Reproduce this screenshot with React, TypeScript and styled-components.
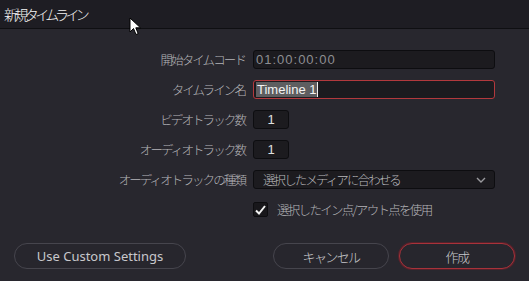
import styled, { createGlobalStyle } from "styled-components"

const GlobalStyle = createGlobalStyle`
  html, body {
    margin: 0;
    padding: 0;
    background: #28272e;
    overflow: hidden;
  }
`

const Window = styled.div`
  position: relative;
  width: 529px;
  height: 281px;
  background: #28272e;
  font-family: "Noto Sans CJK JP", "Noto Sans", sans-serif;
  color: #b4b4b8;
  display: flex;
  flex-direction: column;
`

const TitleBar = styled.div`
  height: 29px;
  box-sizing: border-box;
  background: #1e1d23;
  border-bottom: 1px solid #0f0f12;
  display: flex;
  align-items: center;
  padding-left: 4px;
  font-size: 14px;
  letter-spacing: -3.6px;
  font-weight: 300;
  color: #f4f4f4;
`

const Form = styled.div`
  display: grid;
  grid-template-columns: 245px 242px;
  grid-auto-rows: 19px;
  column-gap: 8px;
  row-gap: 11px;
  padding-top: 21px;
`

const Label = styled.div`
  font-size: 12.5px;
  letter-spacing: -1.9px;
  font-weight: 300;
  text-align: right;
  line-height: 19px;
  color: #b4b4b8;
  white-space: nowrap;
`

const Field = styled.div<{ $active?: boolean; $small?: boolean }>`
  box-sizing: border-box;
  width: ${({ $small }) => ($small ? "36px" : "100%")};
  height: 19px;
  background: #1c1b1f;
  border: 1px solid ${({ $active }) => ($active ? "#b3393d" : "#0d0d10")};
  border-radius: 3px;
  display: flex;
  align-items: center;
  justify-content: ${({ $small }) => ($small ? "center" : "flex-start")};
  padding: 0 2px;
  font-family: "Liberation Sans", Arial, sans-serif;
  font-size: 13px;
  color: #8e8e92;
`

const Timecode = styled.span`
  letter-spacing: 1px;
`

const Selected = styled.span`
  background: #5e5e60;
  color: #f4f4f4;
  line-height: 15px;
  padding: 0 1px;
`

const Caret = styled.span`
  display: inline-block;
  width: 1px;
  height: 15px;
  background: #f0f0f0;
`

const Value = styled.span`
  color: #e0e0e0;
`

const Select = styled(Field)`
  justify-content: space-between;
  padding: 0 8px 0 9px;
  font-family: "Noto Sans CJK JP", sans-serif;
  font-size: 12.5px;
  letter-spacing: -1.9px;
  font-weight: 300;
  color: #b8b8bc;
`

const CheckRow = styled.div`
  display: flex;
  align-items: center;
  gap: 9px;
  font-size: 12.5px;
  letter-spacing: -1.7px;
  font-weight: 300;
  color: #b4b4b8;
`

const CheckBox = styled.div`
  box-sizing: border-box;
  width: 15px;
  height: 15px;
  border: 1px solid #0d0d10;
  background: #18171b;
  border-radius: 2px;
  display: flex;
  align-items: center;
  justify-content: center;
`

const Footer = styled.div`
  display: flex;
  align-items: center;
  padding: 0 14px;
  margin-top: 24px;
`

const Button = styled.button<{ $primary?: boolean; $w: number; $jp?: boolean }>`
  box-sizing: border-box;
  width: ${({ $w }) => $w}px;
  height: 26px;
  border-radius: 13px;
  background: #27262d;
  border: 1px solid ${({ $primary }) => ($primary ? "#a8323a" : "#46454d")};
  box-shadow: ${({ $primary }) =>
    $primary ? "0 0 0 1px rgba(120, 30, 40, 0.55)" : "none"};
  color: #c8c8cc;
  font-family: "Noto Sans", "Noto Sans CJK JP", sans-serif;
  font-size: 13px;
  font-weight: ${({ $jp }) => ($jp ? 300 : 400)};
  letter-spacing: ${({ $jp }) => ($jp ? "-1.6px" : "0")};
  padding: 0;
  cursor: pointer;
`

const Spacer = styled.div`
  flex: 1;
`

const Pointer = styled.svg`
  position: absolute;
  left: 129px;
  top: 17px;
`

export default function App() {
  return (
    <Window>
      <GlobalStyle />
      <TitleBar>新規タイムライン</TitleBar>
      <Form>
        <Label>開始タイムコード</Label>
        <Field>
          <Timecode>01:00:00:00</Timecode>
        </Field>

        <Label>タイムライン名</Label>
        <Field $active>
          <Selected>Timeline 1</Selected>
          <Caret />
        </Field>

        <Label>ビデオトラック数</Label>
        <Field $small>
          <Value>1</Value>
        </Field>

        <Label>オーディオトラック数</Label>
        <Field $small>
          <Value>1</Value>
        </Field>

        <Label>オーディオトラックの種類</Label>
        <Select>
          <span>選択したメディアに合わせる</span>
          <svg width="10" height="6" viewBox="0 0 10 6">
            <path d="M1 1 L5 5 L9 1" fill="none" stroke="#9a9a9e" strokeWidth="1.4" />
          </svg>
        </Select>

        <div />
        <CheckRow>
          <CheckBox>
            <svg width="11" height="10" viewBox="0 0 11 10">
              <path d="M1 5.5 L4 8.5 L10 1" fill="none" stroke="#f2f2f2" strokeWidth="2" />
            </svg>
          </CheckBox>
          選択したイン点/アウト点を使用
        </CheckRow>
      </Form>
      <Footer>
        <Button $w={172}>Use Custom Settings</Button>
        <Spacer />
        <Button $w={116} $jp>
          キャンセル
        </Button>
        <Button $w={116} $jp $primary style={{ marginLeft: 10 }}>
          作成
        </Button>
      </Footer>
      <Pointer width="14" height="20" viewBox="0 0 14 20">
        <path
          d="M1 1 L1 15 L4.5 11.5 L7 17.5 L9.2 16.6 L6.8 10.8 L11.5 10.8 Z"
          fill="#ffffff"
          stroke="#000000"
          strokeWidth="1"
        />
      </Pointer>
    </Window>
  )
}
